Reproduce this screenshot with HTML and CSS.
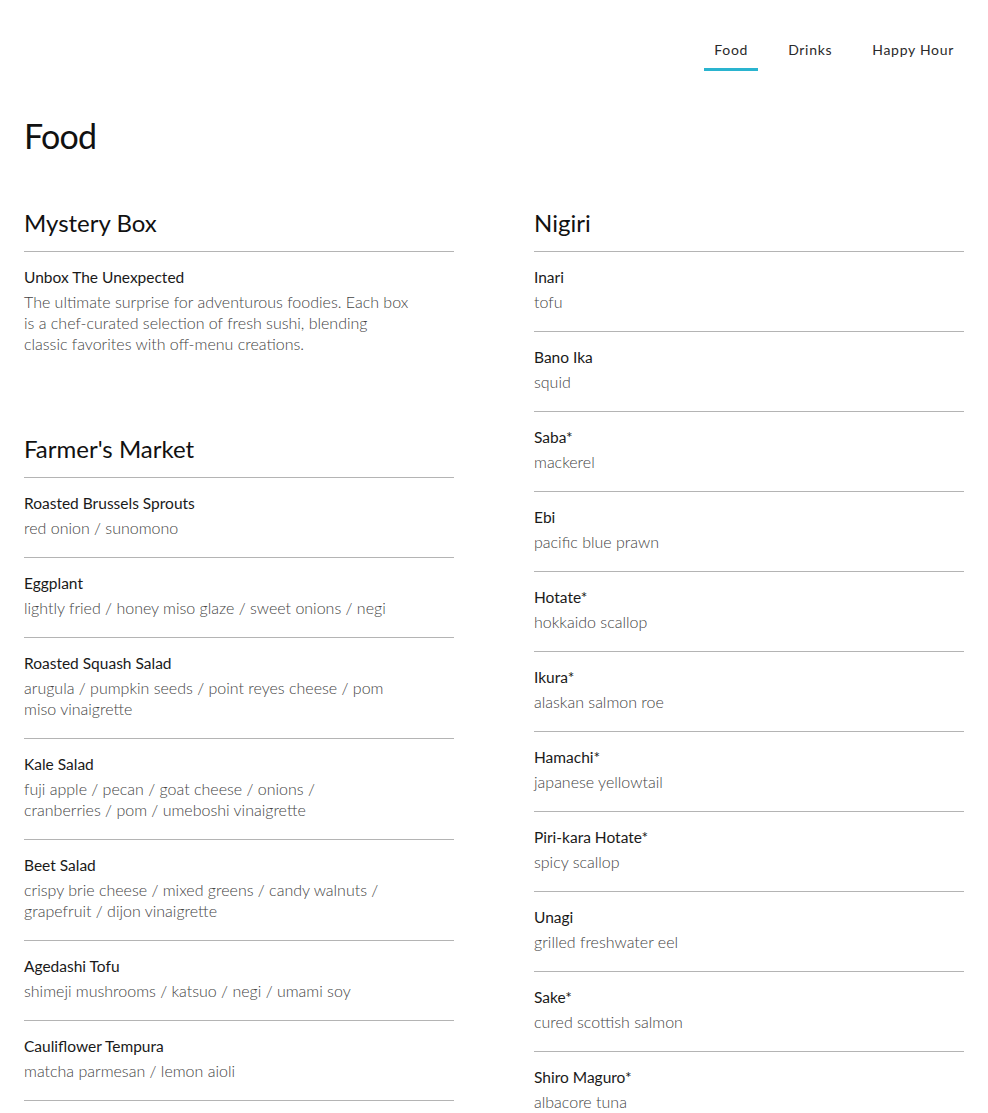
FILE: index.html
```html
<!DOCTYPE html>
<html lang="en">
<head>
<meta charset="utf-8">
<title>Food Menu</title>
<link rel="stylesheet" href="styles.css">
</head>
<body>
<header class="topbar">
  <nav class="tabs">
    <a class="tab active" href="#">Food</a>
    <a class="tab" href="#">Drinks</a>
    <a class="tab" href="#">Happy Hour</a>
  </nav>
</header>
<main class="page">
  <h1 class="page-title">Food</h1>
  <div class="columns">
    <div class="col">
      <section class="section">
        <h2 class="section-title">Mystery Box</h2>
        <ul class="items">
          <li class="item plain">
            <div class="item-name">Unbox The Unexpected</div>
            <div class="item-desc wide">The ultimate surprise for adventurous foodies. Each box is a chef-curated selection of fresh sushi, blending classic favorites with off-menu creations.</div>
          </li>
        </ul>
      </section>
      <section class="section">
        <h2 class="section-title">Farmer's Market</h2>
        <ul class="items">
          <li class="item"><div class="item-name">Roasted Brussels Sprouts</div><div class="item-desc">red onion / sunomono</div></li>
          <li class="item"><div class="item-name">Eggplant</div><div class="item-desc">lightly fried / honey miso glaze / sweet onions / negi</div></li>
          <li class="item"><div class="item-name">Roasted Squash Salad</div><div class="item-desc">arugula / pumpkin seeds / point reyes cheese / pom miso vinaigrette</div></li>
          <li class="item"><div class="item-name">Kale Salad</div><div class="item-desc">fuji apple / pecan / goat cheese / onions / cranberries / pom / umeboshi vinaigrette</div></li>
          <li class="item"><div class="item-name">Beet Salad</div><div class="item-desc">crispy brie cheese / mixed greens / candy walnuts / grapefruit / dijon vinaigrette</div></li>
          <li class="item"><div class="item-name">Agedashi Tofu</div><div class="item-desc">shimeji mushrooms / katsuo / negi / umami soy</div></li>
          <li class="item"><div class="item-name">Cauliflower Tempura</div><div class="item-desc">matcha parmesan / lemon aioli</div></li>
        </ul>
      </section>
    </div>
    <div class="col">
      <section class="section">
        <h2 class="section-title">Nigiri</h2>
        <ul class="items">
          <li class="item"><div class="item-name">Inari</div><div class="item-desc">tofu</div></li>
          <li class="item"><div class="item-name">Bano Ika</div><div class="item-desc">squid</div></li>
          <li class="item"><div class="item-name">Saba*</div><div class="item-desc">mackerel</div></li>
          <li class="item"><div class="item-name">Ebi</div><div class="item-desc">pacific blue prawn</div></li>
          <li class="item"><div class="item-name">Hotate*</div><div class="item-desc">hokkaido scallop</div></li>
          <li class="item"><div class="item-name">Ikura*</div><div class="item-desc">alaskan salmon roe</div></li>
          <li class="item"><div class="item-name">Hamachi*</div><div class="item-desc">japanese yellowtail</div></li>
          <li class="item"><div class="item-name">Piri-kara Hotate*</div><div class="item-desc">spicy scallop</div></li>
          <li class="item"><div class="item-name">Unagi</div><div class="item-desc">grilled freshwater eel</div></li>
          <li class="item"><div class="item-name">Sake*</div><div class="item-desc">cured scottish salmon</div></li>
          <li class="item"><div class="item-name">Shiro Maguro*</div><div class="item-desc">albacore tuna</div></li>
        </ul>
      </section>
    </div>
  </div>
</main>
</body>
</html>
```
FILE: styles.css
```css
* { box-sizing: border-box; }
html, body { margin: 0; padding: 0; background: #fff; }
body {
  font-family: Lato, "Liberation Sans", sans-serif;
  color: #111;
}
.topbar {
  display: flex;
  justify-content: flex-end;
  padding: 0 24px;
}
.tabs {
  display: flex;
  gap: 20px;
  padding-top: 31px;
}
.tab {
  display: block;
  padding: 8px 10px 8px;
  font-size: 14px;
  line-height: 21px;
  letter-spacing: 0.7px;
  color: #2a2a2a;
  text-decoration: none;
  border-bottom: 3px solid transparent;
}
.tab.active { border-bottom-color: #2ab4cf; }

.page { padding: 0 24px; }
.page-title {
  margin: 43px 0 49px;
  font-size: 34px;
  line-height: 44px;
  font-weight: 400;
  letter-spacing: -0.8px;
  color: #111;
}
.columns {
  display: grid;
  grid-template-columns: 1fr 1fr;
  column-gap: 80px;
  align-items: start;
}
.section { margin-bottom: 60px; }
.section-title {
  margin: 0;
  font-size: 24px;
  line-height: 32px;
  font-weight: 400;
  padding-bottom: 12px;
  border-bottom: 1px solid #b4b4b4;
  color: #111;
}
.items { list-style: none; margin: 0; padding: 0; }
.item {
  padding: 14px 0 19px;
  border-bottom: 1px solid #b4b4b4;
}
.item.plain { border-bottom: none; }
.item-name {
  font-size: 15.5px;
  line-height: 22px;
  color: #1a1a1a;
  margin-bottom: 3px;
}
.item-desc {
  font-size: 16px;
  line-height: 21px;
  font-weight: 300;
  color: #444;
  max-width: 365px;
}
.item-desc.wide { max-width: 388px; }
```
